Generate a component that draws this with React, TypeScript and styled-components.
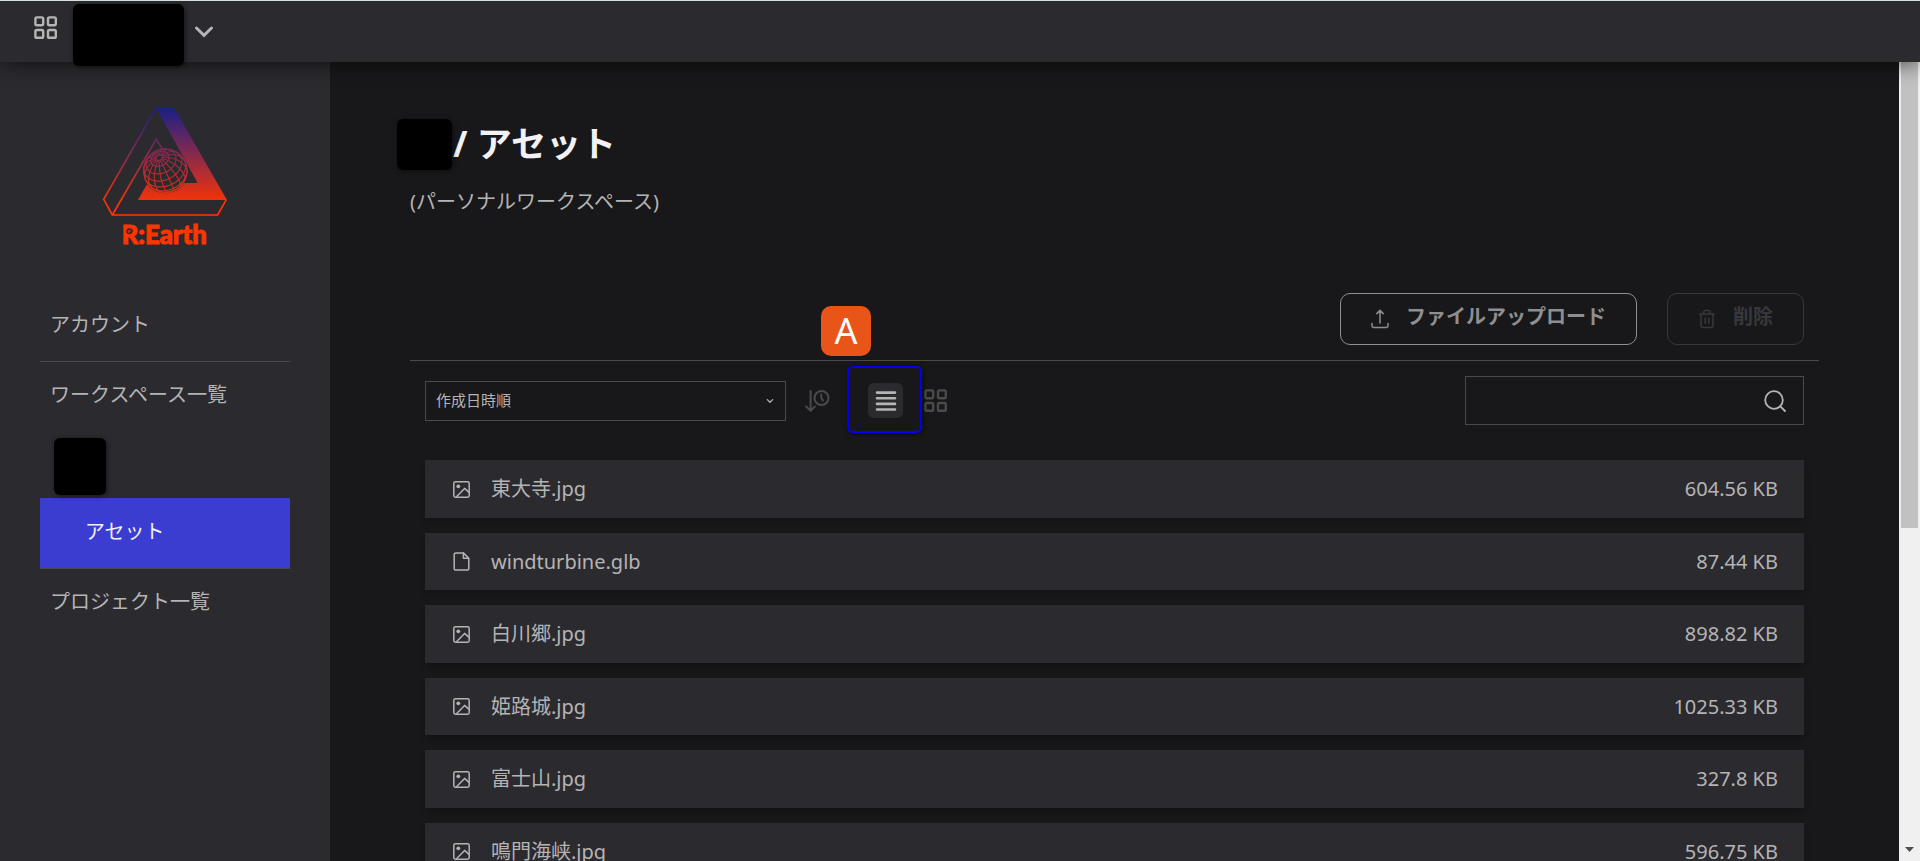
import React from "react";
import styled, { createGlobalStyle } from "styled-components";

const color = {
  bg: "#18181a",
  panel: "#2b2a2f",
  text: "#b5b4b5",
  title: "#f2f1f3",
  border: "#4a4a4a",
  muted: "#4a4a4a",
  disabled: "#38373c",
  active: "#3b3cd0",
  callout: "#e95518",
  frame: "#0000f5",
};

const GlobalStyle = createGlobalStyle`
  *, *::before, *::after { box-sizing: border-box; }
  body {
    margin: 0;
    background: ${color.bg};
    color: ${color.text};
    font-family: "Noto Sans", "Noto Sans CJK JP", sans-serif;
    font-size: 20px;
    line-height: 30px;
  }
  button, input, select { font: inherit; color: inherit; }
  svg { display: block; flex: none; }
`;

const Page = styled.div`
  display: flex;
  flex-direction: column;
  height: 100vh;
  overflow: hidden;
`;

const Header = styled.header`
  position: relative;
  z-index: 2;
  flex: none;
  display: flex;
  align-items: flex-start;
  height: 62px;
  padding: 3px 34px 0;
  border-top: 1px solid #d8e0e2;
  background: ${color.panel};
  box-shadow: 0 3px 20px rgba(0, 0, 0, 0.55);
`;

const BareButton = styled.button`
  display: flex;
  align-items: center;
  justify-content: center;
  padding: 0;
  border: 0;
  background: none;
  cursor: pointer;
`;

const HeaderButton = styled(BareButton)`
  height: 48px;
`;

const MenuButton = styled(BareButton)`
  height: 56px;
`;

const Mask = styled.span<{ $w: number; $h: number }>`
  display: block;
  flex: none;
  width: ${(p) => p.$w}px;
  height: ${(p) => p.$h}px;
  border-radius: 6px;
  background: #000;
  box-shadow: 1px 1px 5px rgba(0, 0, 0, 0.5);
`;

const AccountName = styled.div`
  margin: 0 10px 0 15px;
`;

const Body = styled.div`
  display: flex;
  flex: 1;
  min-height: 0;
`;

const Sidebar = styled.aside`
  flex: none;
  width: 330px;
  padding: 33px 40px 0;
  background: ${color.panel};
`;

const LogoLink = styled.a`
  display: flex;
  justify-content: center;
  margin-bottom: 36px;
`;

const NavList = styled.ul`
  margin: 0;
  padding: 0;
  list-style: none;
`;

const NavLink = styled.a<{ $line?: boolean; $active?: boolean }>`
  display: flex;
  align-items: center;
  height: ${(p) => (p.$line || p.$active ? 71 : 69)}px;
  padding: 0 10px 3px ${(p) => (p.$active ? 45 : 10)}px;
  border-bottom: ${(p) => (p.$line || p.$active ? `1px solid ${color.border}` : "0")};
  background: ${(p) => (p.$active ? color.active : "transparent")};
  color: ${(p) => (p.$active ? color.title : color.text)};
  text-decoration: none;
`;

const NavMask = styled.div`
  display: flex;
  height: 67px;
  padding: 7px 14px 0;
`;

const Main = styled.main`
  flex: 1;
  min-width: 0;
  overflow: hidden;
  padding: 58px 80px 0;
`;

const Title = styled.h1`
  position: relative;
  display: flex;
  margin: 0;
  padding-left: 43px;
  color: ${color.title};
  font-size: 35px;
  line-height: 48px;
  font-weight: 700;
`;

const TitleMask = styled.span`
  position: absolute;
  top: -1px;
  left: -13px;
`;

const Subtitle = styled.p`
  margin: 19px 0 0;
`;

const Actions = styled.div`
  display: flex;
  justify-content: flex-end;
  gap: 30px;
  margin-top: 76px;
  padding: 0 15px 15px;
  border-bottom: 1px solid ${color.border};
`;

const ActionButton = styled.button`
  display: flex;
  align-items: center;
  gap: 16px;
  height: 52px;
  padding: 0 30px 0 29px;
  border: 1px solid #8f8e90;
  border-radius: 10px;
  background: none;
  color: #8f8e90;
  font-weight: 700;
  line-height: 30px;
  cursor: pointer;

  span { padding-bottom: 4px; }

  &:disabled {
    border-color: ${color.disabled};
    color: ${color.disabled};
    cursor: default;
  }
`;

const Toolbar = styled.div`
  display: flex;
  align-items: center;
  padding: 15px 15px 35px;
`;

const SelectBox = styled.div`
  position: relative;
  width: 361px;
  height: 40px;

  svg {
    position: absolute;
    top: 16px;
    right: 12px;
    pointer-events: none;
  }
`;

const SortSelect = styled.select`
  display: block;
  width: 100%;
  height: 100%;
  padding: 0 30px 2px 10px;
  border: 1px solid ${color.border};
  border-radius: 0;
  background: ${color.bg};
  appearance: none;
  font-size: 15px;
  line-height: 24px;
`;

const SortButton = styled(BareButton)`
  margin-left: 18px;
  color: ${color.muted};
`;

const ListViewSlot = styled.div`
  position: relative;
  margin: 0 21px 0 38px;
`;

const ListViewButton = styled(BareButton)`
  width: 35px;
  height: 35px;
  border-radius: 6px;
  background: ${color.panel};
`;

const CalloutFrame = styled.div`
  position: absolute;
  top: -17px;
  left: -21px;
  width: 75px;
  height: 67px;
  border: 2px solid ${color.frame};
  border-radius: 6px;
  box-shadow: 1px 1px 5px rgba(0, 0, 0, 0.5);
  pointer-events: none;
`;

const CalloutBadge = styled.div`
  position: absolute;
  top: -77px;
  left: -47px;
  width: 50px;
  height: 50px;
  border-radius: 10px;
  background: ${color.callout};
  color: #fff;
  font-size: 36px;
  line-height: 50px;
  text-align: center;
`;

const GridViewButton = styled(BareButton)`
  color: ${color.muted};
`;

const SearchBox = styled.label`
  display: flex;
  align-items: center;
  width: 339px;
  height: 49px;
  margin-left: auto;
  padding: 0 17px 0 10px;
  border: 1px solid ${color.border};
`;

const SearchInput = styled.input`
  flex: 1;
  min-width: 0;
  border: 0;
  outline: 0;
  background: none;
`;

const FileList = styled.ul`
  display: grid;
  grid-auto-rows: 58px 57px;
  gap: 15px;
  margin: 0;
  padding: 0 15px;
  list-style: none;
`;

const FileRow = styled.li`
  display: flex;
  align-items: center;
  gap: 21px;
  padding: 0 26px 0 28px;
  background: ${color.panel};
  box-shadow: 0 5px 8px -2px rgba(0, 0, 0, 0.3);
`;

const FileName = styled.span`
  flex: 1;
`;

const ScrollTrack = styled.div`
  flex: none;
  display: flex;
  flex-direction: column;
  justify-content: space-between;
  align-items: center;
  width: 21px;
  padding: 0 2px 9px;
  background: #f0f0f0;
`;

const ScrollThumb = styled.div`
  width: 100%;
  height: 59%;
  background: #c1c1c1;
`;

const GridIcon = () => (
  <svg width="24" height="24" viewBox="0 0 24 24" fill="none" stroke="currentColor" strokeWidth="2.4">
    {[[1.4, 1.4], [14, 1.4], [1.4, 14], [14, 14]].map(([x, y]) => (
      <rect key={`${x}-${y}`} x={x} y={y} width="7.8" height="7.8" rx="1.4" />
    ))}
  </svg>
);

const ChevronIcon = () => (
  <svg width="20" height="12" viewBox="0 0 20 12" fill="none" stroke={color.text} strokeWidth="3" strokeLinecap="round">
    <path d="M2.5 2 10 9.3 17.5 2" />
  </svg>
);

const SmallChevronIcon = () => (
  <svg width="8" height="8" viewBox="0 0 8 8" fill="none" stroke={color.text} strokeWidth="1.3" strokeLinecap="round" strokeLinejoin="round">
    <path d="M1.3 2.6 4 5.2 6.7 2.6" />
  </svg>
);

const SortTimeIcon = () => (
  <svg width="26" height="24" viewBox="0 0 26 24" fill="none" stroke="currentColor" strokeWidth="2" strokeLinecap="round" strokeLinejoin="round">
    <path d="M6.6 2V21.6M2 17.4l4.6 4.4 4.4-4.4" />
    <circle cx="17.5" cy="9" r="7" />
    <path d="M17.3 5.6v3.4l1.6 2.4" />
  </svg>
);

const ListIcon = () => (
  <svg width="22" height="20" viewBox="0 0 22 20" stroke={color.text} strokeWidth="2.6" strokeLinecap="round">
    <path d="M2 1.6H20M2 7.2H20M2 12.9H20M2 18.5H20" />
  </svg>
);

const UploadIcon = () => (
  <svg width="20" height="20" viewBox="0 0 20 20" fill="none" stroke="currentColor" strokeWidth="1.5" strokeLinecap="round" strokeLinejoin="round">
    <path d="M10 14V1.5M6.8 4.6 10 1.4l3.2 3.2M2 14.6v2.2c0 1 .7 1.7 1.7 1.7h12.6c1 0 1.7-.7 1.7-1.7v-2.2" />
  </svg>
);

const TrashIcon = () => (
  <svg width="20" height="20" viewBox="0 0 20 20" fill="none" stroke="currentColor" strokeWidth="1.5" strokeLinecap="round" strokeLinejoin="round">
    <path d="M2.6 5h14.8M6.8 5V3c0-.9.6-1.5 1.5-1.5h3.4c.9 0 1.5.6 1.5 1.5v2M4 5v11.8c0 1 .7 1.7 1.7 1.7h8.6c1 0 1.7-.7 1.7-1.7V5M8.2 9v5.2M11.8 9v5.2" />
  </svg>
);

const SearchIcon = () => (
  <svg width="22" height="22" viewBox="0 0 22 22" fill="none" stroke={color.text} strokeWidth="1.8" strokeLinecap="round">
    <circle cx="10" cy="10" r="8.8" />
    <path d="M16.3 16.3 21 21" />
  </svg>
);

const ImageFileIcon = () => (
  <svg width="17" height="17" viewBox="0 0 17 17" fill="none" stroke={color.text} strokeWidth="1.5" strokeLinejoin="round">
    <rect x="0.8" y="0.8" width="15.4" height="15.4" rx="1.6" />
    <circle cx="5.3" cy="5.3" r="1.9" fill={color.text} stroke="none" />
    <path d="M3.2 16 11.6 7.4 16 11.4" />
  </svg>
);

const DocFileIcon = () => (
  <svg width="17" height="19" viewBox="0 0 17 19" fill="none" stroke={color.text} strokeWidth="1.5" strokeLinejoin="round">
    <path d="M10.4.9H3C2 .9 1.2 1.7 1.2 2.6v13.8c0 1 .8 1.7 1.8 1.7h11c1 0 1.8-.7 1.8-1.7V6.2L10.4.9v5.3h5.4" />
  </svg>
);

const ScrollArrow = () => (
  <svg width="9" height="5" viewBox="0 0 9 5" fill="#505050">
    <path d="M0 0h9L4.5 5z" />
  </svg>
);

// Orthographic globe: meridians and parallels seen with the pole tilted toward the viewer.
const globe = { cx: 226, cy: 227, r: 65 };
const tilt = (48 * Math.PI) / 180;
const roll = (-25 * Math.PI) / 180;

function project(colat: number, lon: number) {
  const x = Math.sin(colat) * Math.sin(lon);
  const y0 = Math.cos(colat);
  const z0 = Math.sin(colat) * Math.cos(lon);
  const y = y0 * Math.cos(tilt) - z0 * Math.sin(tilt);
  const z = y0 * Math.sin(tilt) + z0 * Math.cos(tilt);
  const px = x * Math.cos(roll) + y * Math.sin(roll);
  const py = -x * Math.sin(roll) + y * Math.cos(roll);
  return { x: globe.cx + globe.r * px, y: globe.cy - globe.r * py, visible: z >= 0 };
}

function trace(points: { x: number; y: number; visible: boolean }[]) {
  let d = "";
  let drawing = false;
  points.forEach((p) => {
    if (p.visible) d += `${drawing ? "L" : "M"}${p.x.toFixed(1)} ${p.y.toFixed(1)}`;
    drawing = p.visible;
  });
  return d;
}

const steps = Array.from({ length: 73 }, (_, i) => i / 72);
const parallels = [9, 26, 46, 66, 86, 106, 126].map((deg) =>
  trace(steps.map((t) => project((deg * Math.PI) / 180, t * 2 * Math.PI)))
);
const meridians = Array.from({ length: 16 }, (_, i) =>
  trace(steps.map((t) => project(0.15 + t * (Math.PI - 0.15), (i * Math.PI) / 8)))
);

const Logo = () => (
  <svg width="150" height="160" viewBox="0 0 450 480" role="img" aria-label="R:Earth">
    <defs>
      <linearGradient id="logo" gradientUnits="userSpaceOnUse" x1="0" y1="36" x2="0" y2="330">
        <stop offset="0.03" stopColor="#1e2086" />
        <stop offset="0.5" stopColor="#8a2a4a" />
        <stop offset="0.85" stopColor="#da3018" />
        <stop offset="1" stopColor="#ff3500" />
      </linearGradient>
    </defs>
    <path fill="url(#logo)" d="M197 36H251L411 315H144L173 264H323L199 40Z" />
    <circle cx={globe.cx} cy={globe.cy} r="68" fill={color.panel} />
    <g fill="none" stroke="url(#logo)">
      <path strokeWidth="5" d="M199 38 41 313 67 360H383L409 314M67 360 199 132 218 164" />
      <circle cx={globe.cx} cy={globe.cy} r={globe.r} strokeWidth="4" />
      <path strokeWidth="3.4" d={parallels.concat(meridians).join("")} />
    </g>
    <text
      x="95"
      y="448"
      fill="#ff3500"
      stroke="#ff3500"
      strokeWidth="3"
      fontFamily="Lato, sans-serif"
      fontSize="77"
      fontWeight="900"
    >
      R:Earth
    </text>
    <circle cx="118" cy="409" r="9" fill={color.panel} />
    <path d="M114 409h8a4 4 0 1 0-2 4" fill="none" stroke="#ff3500" strokeWidth="2" />
  </svg>
);

const files = [
  { name: "東大寺.jpg", size: "604.56 KB", image: true },
  { name: "windturbine.glb", size: "87.44 KB", image: false },
  { name: "白川郷.jpg", size: "898.82 KB", image: true },
  { name: "姫路城.jpg", size: "1025.33 KB", image: true },
  { name: "富士山.jpg", size: "327.8 KB", image: true },
  { name: "鳴門海峡.jpg", size: "596.75 KB", image: true },
];

export default function App() {
  return (
    <Page lang="ja">
      <GlobalStyle />
      <Header>
        <HeaderButton aria-label="ダッシュボード">
          <GridIcon />
        </HeaderButton>
        <AccountName>
          <Mask $w={111} $h={62} />
        </AccountName>
        <MenuButton aria-label="アカウントメニュー">
          <ChevronIcon />
        </MenuButton>
      </Header>
      <Body>
        <Sidebar>
          <LogoLink href="#">
            <Logo />
          </LogoLink>
          <nav>
            <NavList>
              <li><NavLink href="#account" $line>アカウント</NavLink></li>
              <li><NavLink href="#workspaces">ワークスペース一覧</NavLink></li>
              <li><NavMask><Mask $w={52} $h={57} /></NavMask></li>
              <li><NavLink href="#assets" $active aria-current="page">アセット</NavLink></li>
              <li><NavLink href="#projects">プロジェクト一覧</NavLink></li>
            </NavList>
          </nav>
        </Sidebar>
        <Main>
          <Title>
            <TitleMask><Mask $w={55} $h={51} /></TitleMask>
            / アセット
          </Title>
          <Subtitle>(パーソナルワークスペース)</Subtitle>
          <Actions>
            <ActionButton>
              <UploadIcon />
              <span>ファイルアップロード</span>
            </ActionButton>
            <ActionButton disabled>
              <TrashIcon />
              <span>削除</span>
            </ActionButton>
          </Actions>
          <Toolbar>
            <SelectBox>
              <SortSelect aria-label="並び順" defaultValue="date">
                <option value="date">作成日時順</option>
              </SortSelect>
              <SmallChevronIcon />
            </SelectBox>
            <SortButton aria-label="昇順・降順">
              <SortTimeIcon />
            </SortButton>
            <ListViewSlot>
              <ListViewButton aria-label="リスト表示" aria-pressed="true">
                <ListIcon />
              </ListViewButton>
              <CalloutFrame />
              <CalloutBadge>A</CalloutBadge>
            </ListViewSlot>
            <GridViewButton aria-label="グリッド表示">
              <GridIcon />
            </GridViewButton>
            <SearchBox>
              <SearchInput type="text" aria-label="検索" />
              <SearchIcon />
            </SearchBox>
          </Toolbar>
          <FileList>
            {files.map((file) => (
              <FileRow key={file.name}>
                {file.image ? <ImageFileIcon /> : <DocFileIcon />}
                <FileName>{file.name}</FileName>
                <span>{file.size}</span>
              </FileRow>
            ))}
          </FileList>
        </Main>
        <ScrollTrack aria-hidden="true">
          <ScrollThumb />
          <ScrollArrow />
        </ScrollTrack>
      </Body>
    </Page>
  );
}
